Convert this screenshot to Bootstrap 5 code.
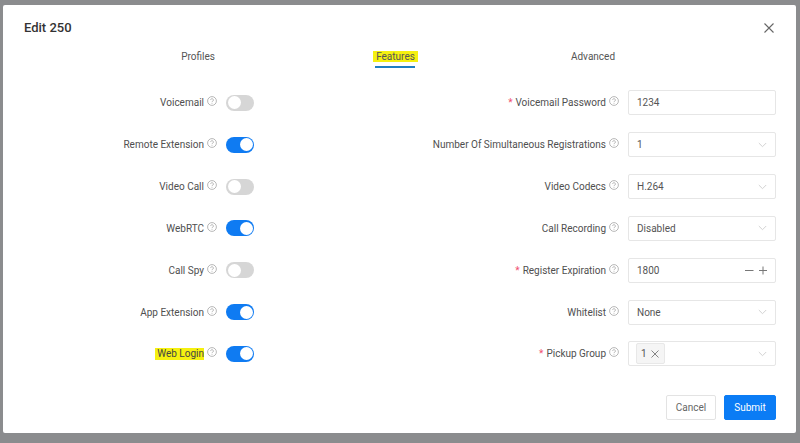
<!DOCTYPE html>
<html lang="en">

<head>
    <meta charset="UTF-8" />
    <meta name="viewport" content="width=device-width, initial-scale=1.0" />
    <title>Edit 250</title>
    <link href="https://cdn.jsdelivr.net/npm/bootstrap@5.3.2/dist/css/bootstrap.min.css" rel="stylesheet" />
    <style>
        html, body {
            height: 100%;
        }

        body {
            background: #8b8c8e;
            font-family: Roboto, "Noto Sans", sans-serif;
            font-size: 10px;
            color: #4f4f4f;
            overflow: hidden;
            padding: 5px 4px 10px 3px;
        }

        .dlg {
            height: 428px;
            background: #fff;
            border-radius: 2px;
            padding: 0 20px 13px 0;
        }

        .dlg-head {
            height: 46px;
            padding-left: 21px;
        }

        .dlg-title {
            font-family: Roboto, sans-serif;
            font-size: 13px;
            font-weight: 500;
            color: #333;
            margin: 0;
        }

        .close-x {
            margin-right: 2px;
        }

        .tab-row {
            height: 11px;
            margin-right: -12px;
            margin-bottom: 20px;
        }

        .tab-item {
            width: 197.5px;
            text-align: center;
            color: #555;
        }

        .tab-on {
            display: inline-block;
            position: relative;
            line-height: 11px;
            padding: 0 3px;
            background: #f5f010;
        }

        .tab-on::after {
            content: "";
            position: absolute;
            left: 2px;
            right: 3px;
            top: 15px;
            height: 2px;
            background: #1f7fc4;
        }

        .col-left {
            width: 251px;
        }

        .field {
            height: 41.85px;
        }

        .yellow {
            background: #f5f010;
            padding: 1px 0 1px 2px;
            margin-left: -2px;
            color: #444;
            line-height: 10px;
        }

        .help-icon {
            width: 10px;
            height: 10px;
            margin: -3px 9px 0 3px;
            flex: none;
        }

        .toggle {
            width: 28px;
            height: 16px;
            border-radius: 8px;
            background: #d6d6d6;
            padding: 1.5px;
            flex: none;
        }

        .toggle-on {
            background: #0f7bf2;
            justify-content: flex-end;
        }

        .knob {
            width: 13px;
            height: 13px;
            border-radius: 50%;
            background: #fff;
        }

        .ctl {
            width: 148px;
            height: 25px;
            flex: none;
            border: 1px solid #e6e6e6;
            border-radius: 2px;
            padding: 0 8px;
            color: #555;
        }

        .req {
            color: #f0506e;
            margin-right: 3px;
        }

        .chip {
            width: 29px;
            height: 21px;
            margin-left: -1px;
            background: #f5f5f5;
            border: 1px solid #e8e8e8;
            border-radius: 2px;
            padding-left: 4px;
        }

        .btn-cancel, .btn-submit {
            height: 25px;
            padding: 0;
            font-size: 10px;
            border-radius: 2px;
        }

        .btn-cancel {
            width: 50px;
            color: #666;
            background: #fff;
            border: 1px solid #e3e3e3;
        }

        .btn-submit {
            width: 52px;
            color: #fff;
            background: #0b7cf5;
            border: 1px solid #0b7cf5;
        }
    </style>
</head>

<body>
    <div class="dlg d-flex flex-column">
        <div class="dlg-head d-flex justify-content-between align-items-center">
            <h5 class="dlg-title">Edit 250</h5>
            <svg width="10" height="10" viewBox="0 0 10 10" class="close-x" fill="none" stroke="#666" stroke-width="1.1"><path d="M.5.5l9 9M9.5.5l-9 9" /></svg>
        </div>

        <div class="tab-row d-flex justify-content-center align-items-center">
            <div class="tab-item">Profiles</div>
            <div class="tab-item"><span class="tab-on">Features</span></div>
            <div class="tab-item">Advanced</div>
        </div>

        <div class="d-flex">
            <div class="col-left" id="leftCol"></div>
            <div class="flex-grow-1" id="rightCol"></div>
        </div>

        <div class="d-flex justify-content-end gap-2 mt-auto">
            <button class="btn btn-cancel" type="button">Cancel</button>
            <button class="btn btn-submit" type="button">Submit</button>
        </div>
    </div>

    <script src="https://cdn.jsdelivr.net/npm/bootstrap@5.3.2/dist/js/bootstrap.bundle.min.js"></script>
    <script>
        const help = '<svg class="help-icon" viewBox="0 0 10 10" fill="none" stroke="#9a9a9a" stroke-width=".7">' +
            '<circle cx="5" cy="5" r="4.4" /><path d="M3.6 4a1.4 1.3 0 1 1 2.2 1.1c-.5.3-.8.5-.8 1.1" /><path d="M5 7.2v.7" /></svg>';
        const chevron = '<svg width="9" height="6" viewBox="0 0 9 6" fill="none" stroke="#d2d2d2" stroke-width="1"><path d="M.8 1l3.7 3.7L8.200 1" /></svg>';
        const cross = '<svg width="8" height="8" viewBox="0 0 8 8" fill="none" stroke="#777" stroke-width=".9"><path d="M.5.5l7 7M7.5.5l-7 7" /></svg>';

        const leftRows = [
            ['Voicemail', false], ['Remote Extension', true], ['Video Call', false], ['WebRTC', true],
            ['Call Spy', false], ['App Extension', true], ['Web Login', true]
        ];
        const rightRows = [
            ['Voicemail Password', '1234', 'text', true],
            ['Number Of Simultaneous Registrations', '1', 'select'],
            ['Video Codecs', 'H.264', 'select'],
            ['Call Recording', 'Disabled', 'select'],
            ['Register Expiration', '1800', 'number', true],
            ['Whitelist', 'None', 'select'],
            ['Pickup Group', '1', 'tags', true]
        ];

        document.getElementById('leftCol').innerHTML = leftRows.map(function (r) {
            const label = r[0] === 'Web Login' ? '<span class="yellow">Web Login</span>' : '<span>' + r[0] + '</span>';
            return '<div class="field d-flex justify-content-end align-items-center">' + label + help +
                '<div class="toggle d-flex' + (r[1] ? ' toggle-on' : '') + '"><div class="knob"></div></div></div>';
        }).join('');

        document.getElementById('rightCol').innerHTML = rightRows.map(function (r) {
            let inner = '<span>' + r[1] + '</span>';
            if (r[2] === 'select') inner += chevron;
            if (r[2] === 'number') {
                inner += '<svg width="22" height="9" viewBox="0 0 22 9" fill="none" stroke="#777" stroke-width="1"><path d="M0 4.5h8.500M14 4.500h8M18 .5v8" /></svg>';
            }
            if (r[2] === 'tags') {
                inner = '<span class="chip d-flex align-items-center gap-1">' + r[1] + cross + '</span>' + chevron;
            }
            return '<div class="field d-flex justify-content-end align-items-center">' +
                (r[3] ? '<span class="req">*</span>' : '') + '<span>' + r[0] + '</span>' + help +
                '<div class="ctl d-flex justify-content-between align-items-center">' + inner + '</div></div>';
        }).join('');
    </script>
</body>

</html>
